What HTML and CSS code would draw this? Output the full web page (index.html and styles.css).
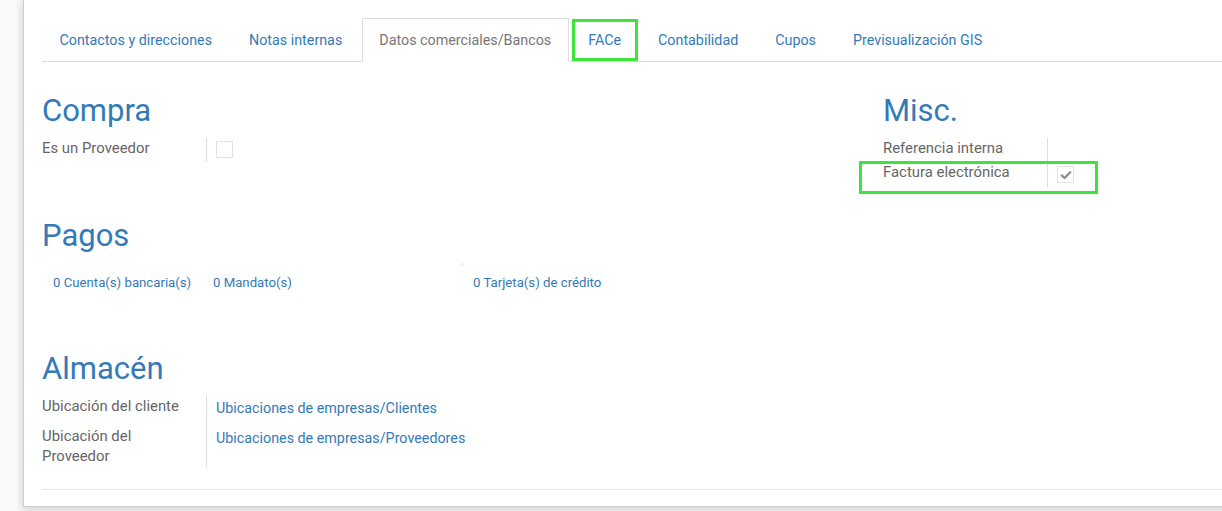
FILE: index.html
```html
<!DOCTYPE html>
<html lang="es">
<head>
<meta charset="utf-8">
<title>Datos comerciales</title>
<link rel="stylesheet" href="styles.css">
</head>
<body>
<div class="sheet">
  <ul class="tabs">
    <li class="tab"><a>Contactos y direcciones</a></li>
    <li class="tab"><a>Notas internas</a></li>
    <li class="tab active"><a>Datos comerciales/Bancos</a></li>
    <li class="tab marked"><a>FACe</a></li>
    <li class="tab"><a>Contabilidad</a></li>
    <li class="tab"><a>Cupos</a></li>
    <li class="tab"><a>Previsualización GIS</a></li>
  </ul>

  <div class="content">
    <div class="two-cols">
      <div class="col-left">
        <h2 class="title">Compra</h2>
        <div class="fields">
          <div class="row row-compra">
            <div class="label">Es un Proveedor</div>
            <div class="value"><span class="checkbox"></span></div>
          </div>
        </div>
      </div>
      <div class="col-right">
        <h2 class="title">Misc.</h2>
        <div class="fields">
          <div class="row row-ref">
            <div class="label">Referencia interna</div>
            <div class="value"></div>
          </div>
          <div class="row row-fact highlighted">
            <div class="label">Factura electrónica</div>
            <div class="value"><span class="checkbox checked"><svg viewBox="0 0 16 16" width="14" height="14"><path d="M3.2 8.4 L6.4 11.4 L12.8 4.8" fill="none" stroke="#8c8c8c" stroke-width="2.6" stroke-linecap="round" stroke-linejoin="round"/></svg></span></div>
          </div>
        </div>
      </div>
    </div>

    <h2 class="title title-pagos">Pagos</h2>
    <div class="button-box">
      <a class="stat-btn">0 Cuenta(s) bancaria(s)</a>
      <a class="stat-btn">0 Mandato(s)</a>
      <span class="stat-gap"></span>
      <span class="stat-stub"></span>
      <a class="stat-btn">0 Tarjeta(s) de crédito</a>
    </div>

    <h2 class="title title-almacen">Almacén</h2>
    <div class="fields">
      <div class="row row-loc">
        <div class="label">Ubicación del cliente</div>
        <div class="value"><a class="link">Ubicaciones de empresas/Clientes</a></div>
      </div>
      <div class="row row-loc2">
        <div class="label">Ubicación del Proveedor</div>
        <div class="value"><a class="link">Ubicaciones de empresas/Proveedores</a></div>
      </div>
    </div>

    <div class="bottom-sep"></div>
  </div>
</div>
</body>
</html>
```

FILE: styles.css
```css
html, body {
  margin: 0;
  padding: 0;
}
body {
  background: #f9f9f9;
  font-family: Roboto, "Liberation Sans", sans-serif;
  font-size: 14.3px;
  color: #666;
  overflow: hidden;
  height: 511px;
}
.sheet {
  margin-left: 23px;
  width: 1500px;
  background: #fff;
  border-left: 1px solid #cfcfcf;
  border-bottom: 1px solid #cfcfcf;
  box-shadow: 0 4px 8px rgba(0,0,0,0.12), -3px 0 6px rgba(0,0,0,0.05);
  padding: 18px 0 16px 18px;
}
.tabs {
  list-style: none;
  margin: 0;
  padding: 0;
  display: flex;
  border-bottom: 1px solid #ddd;
}
.tab {
  margin-right: 2px;
  margin-bottom: -1px;
  border: 1px solid transparent;
  padding: 11px 16.5px 10px;
  line-height: 21px;
  color: #337ab7;
  white-space: nowrap;
}
.tab.active {
  border-color: #ddd;
  border-bottom-color: #fff;
  background: #fff;
  color: #777;
}
.tab.marked {
  box-shadow: inset 0 0 0 3px #3ee43a;
}
.content {
  padding-top: 31px;
}
.title {
  margin: 0;
  font-size: 31px;
  line-height: 36px;
  font-weight: 400;
  color: #337ab7;
}
.two-cols {
  display: flex;
}
.col-left {
  width: 841px;
}
.col-right {
  width: 400px;
}
.fields {
  margin-top: 9px;
  display: flex;
  flex-direction: column;
}
.row {
  display: flex;
  position: relative;
}
.label {
  width: 158px;
  padding-right: 6px;
  border-right: 1px solid #ddd;
  line-height: 20px;
  font-size: 14.9px;
  font-weight: 400;
  color: #666;
}
.value {
  padding-left: 9px;
  line-height: 20px;
}
.row-compra .label { height: 24px; }
.row-compra .value { padding-top: 3px; }
.row-ref .label { height: 24px; }
.row-fact .label { height: 25px; }
.row-fact .value { padding-top: 4px; }
.highlighted::after {
  content: "";
  position: absolute;
  left: -24px;
  top: -1px;
  width: 233px;
  height: 27px;
  border: 3px solid #3ee43a;
}
.checkbox {
  display: flex;
  align-items: center;
  justify-content: center;
  width: 15px;
  height: 15px;
  border: 1px solid #e2e2e2;
  background: #fff;
}
.title-pagos {
  margin-top: 31px;
}
.button-box {
  margin-top: 8px;
  display: flex;
  align-items: flex-start;
  height: 42px;
}
.stat-btn {
  width: 149px;
  padding-left: 11px;
  line-height: 42px;
  font-size: 13.2px;
  color: #337ab7;
  white-space: nowrap;
}
.stat-gap {
  width: 100px;
}
.stat-stub {
  width: 1px;
  height: 3px;
  margin-top: 1px;
  background: #ddd;
}
.stat-btn:last-child {
  padding-left: 10px;
}
.title-almacen {
  margin-top: 47px;
}
.title-almacen + .fields {
  margin-top: 8px;
}
.row-loc .label { height: 30px; padding-top: 1px; }
.row-loc .value { padding-top: 3px; }
.row-loc2 .label { height: 41px; }
.row-loc2 .value { padding-top: 2px; }
.link {
  color: #337ab7;
}
.bottom-sep {
  margin-top: 22px;
  border-top: 1px solid #e6e6e6;
}
```
